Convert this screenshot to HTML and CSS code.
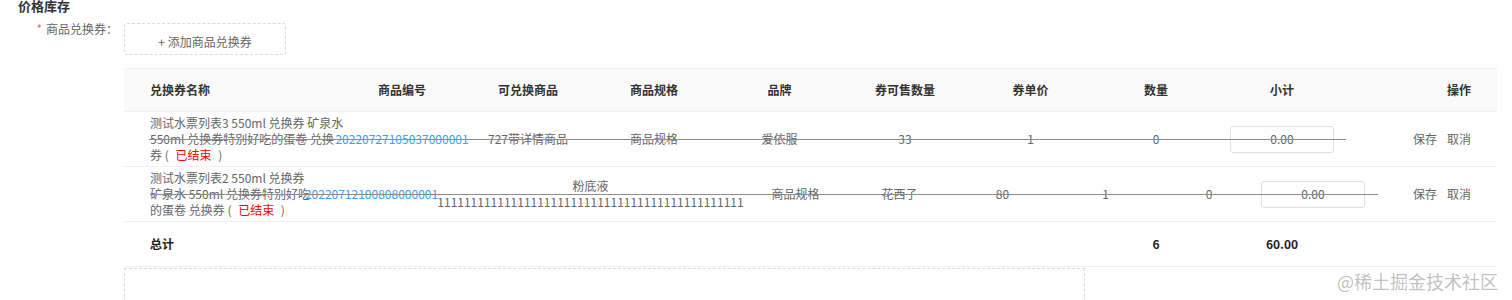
FILE: index.html
```html
<!DOCTYPE html>
<html lang="zh-CN">
<head>
    <meta charset="UTF-8">
    <meta name="viewport" content="width=device-width, initial-scale=1.0">
    <title>价格库存</title>
    <link rel="stylesheet" href="styles.css">
</head>
<body>
    <div class="page">
        <h3 class="section-title">价格库存</h3>
        <div class="form-row">
            <label class="form-label"><span class="required">*</span>商品兑换券：</label>
            <div class="add-box">+ 添加商品兑换券</div>
        </div>

        <div class="coupon-table">
            <div class="tr thead cols-a">
                <div class="td name">兑换券名称</div>
                <div class="td">商品编号</div>
                <div class="td">可兑换商品</div>
                <div class="td">商品规格</div>
                <div class="td">品牌</div>
                <div class="td">券可售数量</div>
                <div class="td">券单价</div>
                <div class="td">数量</div>
                <div class="td">小计</div>
                <div class="td op">操作</div>
            </div>

            <div class="tr row struck cols-a line-a">
                <div class="td name">
                    <div>测试水票列表3 550ml 兑换券 矿泉水<br>550ml 兑换券特别好吃的蛋卷 兑换<br>券 ( <span class="ended">已结束</span> )</div>
                </div>
                <div class="td"><span class="code">20220727105037000001</span></div>
                <div class="td">727带详情商品</div>
                <div class="td">商品规格</div>
                <div class="td">爱依服</div>
                <div class="td">33</div>
                <div class="td">1</div>
                <div class="td">0</div>
                <div class="td"><div class="subtotal">0.00</div></div>
                <div class="td op"><span class="link">保存</span><span class="link">取消</span></div>
            </div>

            <div class="tr row struck cols-b line-b">
                <div class="td name">
                    <div>测试水票列表2 550ml 兑换券<br>矿泉水 550ml 兑换券特别好吃<br>的蛋卷 兑换券 ( <span class="ended">已结束</span> )</div>
                </div>
                <div class="td"><span class="code">20220712100808000001</span></div>
                <div class="td"><div class="goods">粉底液<br>1111111111111111111111111111111111111111111111</div></div>
                <div class="td">商品规格</div>
                <div class="td">花西子</div>
                <div class="td">80</div>
                <div class="td">1</div>
                <div class="td">0</div>
                <div class="td"><div class="subtotal">0.00</div></div>
                <div class="td op"><span class="link">保存</span><span class="link">取消</span></div>
            </div>

            <div class="tr total cols-a">
                <div class="td name">总计</div>
                <div class="td"></div>
                <div class="td"></div>
                <div class="td"></div>
                <div class="td"></div>
                <div class="td"></div>
                <div class="td"></div>
                <div class="td">6</div>
                <div class="td">60.00</div>
                <div class="td op"></div>
            </div>
        </div>

        <div class="drop-box"></div>
    </div>

    <div class="watermark">@稀土掘金技术社区</div>
</body>
</html>
```

FILE: styles.css
```css
body {
    margin: 0;
    font-family: "Noto Sans CJK SC", sans-serif;
    font-size: 12px;
    color: #666;
    background: #fff;
}
.page {
    padding: 0 15px 0 18px;
}
.section-title {
    margin: -4px 0 0;
    font-size: 13px;
    line-height: 20px;
    font-weight: bold;
    color: #333;
}
.form-row {
    display: flex;
    margin-top: 7px;
}
.form-label {
    width: 106px;
    box-sizing: border-box;
    padding-right: 6px;
    text-align: right;
    line-height: 12px;
    color: #666;
}
.required {
    color: #f56c6c;
    margin-right: 4px;
}
.add-box {
    width: 162px;
    height: 32px;
    box-sizing: border-box;
    padding-top: 4px;
    border: 1px dashed #d9d9d9;
    border-radius: 3px;
    display: flex;
    justify-content: center;
    align-items: center;
    color: #666;
}
.coupon-table {
    margin: 13px 0 0 106px;
}
.tr {
    display: grid;
    position: relative;
    box-sizing: border-box;
    border-bottom: 1px solid #f0f0f0;
}
.cols-a {
    grid-template-columns: 215px 126px 126px 126px 125px 126px 125px 126px 126px 1fr;
}
.cols-b {
    grid-template-columns: 181px 133px 305px 105px 103px 103px 103px 104px 104px 1fr;
}
.td {
    display: flex;
    align-items: center;
    justify-content: center;
    white-space: nowrap;
    line-height: 16px;
}
.td.name {
    justify-content: flex-start;
    padding-left: 26px;
}
.td.op {
    justify-content: flex-end;
    padding-right: 26px;
    gap: 10px;
}
.thead {
    height: 44px;
    background: #fafafa;
    border-top: 1px solid #f2f2f2;
    font-weight: bold;
    color: #333;
}
.row {
    height: 55px;
}
.total {
    height: 45px;
    font-weight: bold;
    color: #222;
}
.struck::after {
    content: "";
    position: absolute;
    top: 27px;
    height: 1px;
    background: #8c8c8c;
}
.line-a::after {
    left: 25px;
    width: 1197px;
}
.line-b::after {
    left: 26px;
    width: 1228px;
}
.ended {
    color: #f00;
    margin: 0 4px;
}
.code {
    color: #409eff;
}
.goods {
    text-align: center;
}
.subtotal {
    width: 104px;
    height: 27px;
    box-sizing: border-box;
    border: 1px solid #dcdfe6;
    border-radius: 3px;
    display: flex;
    align-items: center;
    justify-content: center;
    color: #666;
}
.link {
    color: #666;
    cursor: pointer;
}
.drop-box {
    margin: 1px 0 0 106px;
    width: 961px;
    height: 100px;
    box-sizing: border-box;
    border: 1px dashed #d9d9d9;
}
.watermark {
    position: absolute;
    top: 268px;
    right: 14px;
    font-size: 18px;
    color: rgba(140, 140, 140, 0.55);
}
```
